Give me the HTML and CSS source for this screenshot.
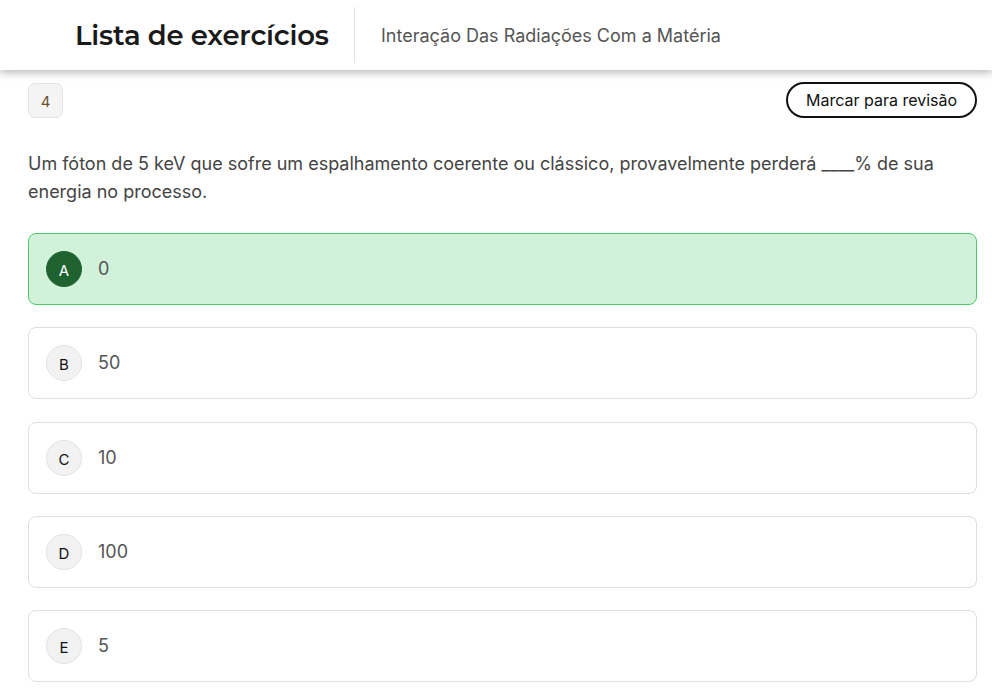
FILE: index.html
```html
<!DOCTYPE html>
<html lang="pt">
<head>
<meta charset="utf-8">
<title>Lista de exercícios</title>
<link rel="stylesheet" href="styles.css">
</head>
<body>
<header class="topbar">
  <h1 class="title">Lista de exercícios</h1>
  <div class="divider"></div>
  <div class="subtitle">Interação Das Radiações Com a Matéria</div>
</header>
<main class="content">
  <div class="qhead">
    <span class="qnum">4</span>
    <button class="review">Marcar para revisão</button>
  </div>
  <p class="question">Um fóton de 5 keV que sofre um espalhamento coerente ou clássico, provavelmente perderá ____% de sua energia no processo.</p>
  <ul class="options">
    <li class="option selected"><span class="letter">A</span><span class="text">0</span></li>
    <li class="option"><span class="letter">B</span><span class="text">50</span></li>
    <li class="option"><span class="letter">C</span><span class="text">10</span></li>
    <li class="option"><span class="letter">D</span><span class="text">100</span></li>
    <li class="option"><span class="letter">E</span><span class="text">5</span></li>
  </ul>
</main>
</body>
</html>
```
FILE: styles.css
```css
* { box-sizing: border-box; }
html, body { margin: 0; padding: 0; background: #fff; }
body { font-family: Inter, "Noto Sans", sans-serif; color: #444; overflow: hidden; }

.topbar {
  height: 70px;
  display: flex;
  align-items: center;
  background: #fff;
  box-shadow: 0 2px 9px rgba(0,0,0,0.32);
  position: relative;
  z-index: 2;
}
.title {
  margin: 0 0 0 75px;
  font-family: "Montserrat", Inter, sans-serif;
  font-size: 27.5px;
  font-weight: 600;
  color: #1a1a1a;
  letter-spacing: -0.2px;
  width: 252px;
  white-space: nowrap;
}
.divider {
  width: 1px;
  height: 56px;
  background: #e2e2e2;
  margin-left: 27px;
  margin-right: 26px;
}
.subtitle {
  font-size: 18px;
  color: #555;
}

.content { padding: 12px 15px 0 28px; }
.qhead {
  display: flex;
  justify-content: space-between;
  align-items: center;
}
.qnum {
  width: 35px; height: 35px;
  margin-top: 1px;
  display: flex; align-items: center; justify-content: center;
  background: #f4f4f4;
  border: 1px solid #e3e3e3;
  border-radius: 7px;
  font-size: 15px;
  color: #6b5031;
  padding-top: 2px;
}
.review {
  font-family: Inter, sans-serif;
  font-size: 16px;
  color: #111;
  background: #fff;
  border: 2px solid #111;
  border-radius: 18px;
  height: 36px;
  width: 191px;
  padding: 0;
}
.question {
  margin: 32px 0 27px;
  font-size: 18px;
  line-height: 28px;
  color: #444;
  padding-right: 20px;
}
.options {
  list-style: none;
  margin: 0;
  padding: 0;
  display: flex;
  flex-direction: column;
  gap: 22.3px;
}
.option {
  height: 72px;
  display: flex;
  align-items: center;
  padding-left: 17px;
  border: 1px solid #dedede;
  border-radius: 8px;
  background: #fff;
}
.option.selected {
  background: #d1f2d9;
  border-color: #4ecb69;
}
.letter {
  width: 36px; height: 36px;
  border-radius: 50%;
  background: #f2f2f2;
  border: 1px solid #e2e2e2;
  display: flex; align-items: center; justify-content: center;
  font-size: 15px;
  color: #111;
  padding-top: 3px;
}
.selected .letter {
  background: #1e632f;
  border-color: #1e632f;
  color: #fff;
}
.text {
  margin-left: 16px;
  font-size: 18px;
  color: #555;
  margin-top: -1px;
}
```
